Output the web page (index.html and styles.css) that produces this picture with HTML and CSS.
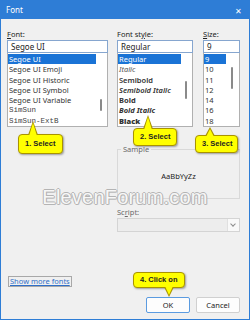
FILE: index.html
```html
<!DOCTYPE html>
<html lang="en">
<head>
  <meta charset="UTF-8">
  <meta name="viewport" content="width=device-width, initial-scale=1.0">
  <title>Font</title>
  <link rel="stylesheet" href="styles.css">
</head>
<body>
  <div class="dialog">
    <div class="titlebar">
      <span class="title">Font</span>
      <span class="close">&#x2715;</span>
    </div>

    <div class="frame">
      <div class="pickers">
        <div class="picker picker-font">
          <div class="lbl"><u>F</u>ont:</div>
          <div class="field">Segoe UI</div>
          <div class="list">
            <ul class="items">
              <li class="sel">Segoe UI</li>
              <li>Segoe UI Emoji</li>
              <li>Segoe UI Historic</li>
              <li>Segoe UI Symbol</li>
              <li>Segoe UI Variable</li>
              <li class="mono">SimSun</li>
              <li class="mono">SimSun-ExtB</li>
            </ul>
            <div class="scroll"><span class="thumb thumb-font"></span></div>
          </div>
        </div>

        <div class="picker picker-style">
          <div class="lbl">Font st<u>y</u>le:</div>
          <div class="field">Regular</div>
          <div class="list">
            <ul class="items">
              <li class="sel">Regular</li>
              <li class="it">Italic</li>
              <li class="sb">Semibold</li>
              <li class="sb it">Semibold Italic</li>
              <li class="bd">Bold</li>
              <li class="bd it">Bold Italic</li>
              <li class="bk">Black</li>
            </ul>
            <div class="scroll"><span class="thumb thumb-style"></span></div>
          </div>
        </div>

        <div class="picker picker-size">
          <div class="lbl"><u>S</u>ize:</div>
          <div class="field">9</div>
          <div class="list">
            <ul class="items">
              <li class="sel">9</li>
              <li>10</li>
              <li>11</li>
              <li>12</li>
              <li>14</li>
              <li>16</li>
              <li>18</li>
            </ul>
            <div class="scroll"><span class="thumb thumb-size"></span></div>
          </div>
        </div>
      </div>

      <div class="preview">
        <fieldset class="sample">
          <legend>Sample</legend>
          <div class="sample-text">AaBbYyZz</div>
        </fieldset>
        <div class="lbl lbl-muted">Sc<u>r</u>ipt:</div>
        <div class="select"><span class="chev"></span></div>
      </div>

      <div class="footer">
        <a class="more" href="#">Show more fonts</a>
        <div class="buttons">
          <button class="btn btn-ok">OK</button>
          <button class="btn">Cancel</button>
        </div>
      </div>
    </div>

    <div class="watermark">ElevenForum.com</div>

    <div class="callout callout-1">1. Select</div>
    <div class="callout callout-2">2. Select</div>
    <div class="callout callout-3">3. Select</div>
    <div class="callout callout-4 down">4. Click on</div>
  </div>
</body>
</html>
```

FILE: styles.css
```css
body { margin: 0; font-family: 'Noto Sans', 'Open Sans', sans-serif; font-size: 7.5px; color: #1a1a1a; background: #fff; }
u { text-decoration-thickness: 1px; text-underline-offset: 1px; }

.dialog { position: relative; width: 250px; height: 320px; }
.titlebar { height: 19px; background: #2e7dd6; color: #fff; display: flex; align-items: center; justify-content: space-between; padding: 0 8px 0 6px; }
.title { font-size: 8px; }
.close { font-size: 8px; margin-top: 2px; }

.frame { height: 301px; box-sizing: border-box; border: 1px solid #2e7dd6; border-top: none; background: #f0f0f0; padding: 10px 9px 6px 6px; display: flex; flex-direction: column; }

.pickers { display: flex; }
.picker-font { width: 101px; }
.picker-style { width: 76px; margin-left: 9px; }
.picker-size { width: 37px; margin-left: 10px; }

.lbl { height: 10px; line-height: 10px; margin-bottom: 1px; color: #222; }
.lbl-muted { color: #6a6a6a; }

.field { height: 13px; box-sizing: border-box; border: 1px solid #86a6cf; background: #fff; line-height: 11px; padding-left: 3px; font-size: 8px; }

.list { height: 74px; box-sizing: border-box; border: 1px solid #b0b0b0; border-top: none; background: #fff; display: flex; }
.items { list-style: none; margin: 0; padding: 1px 0 0 0; flex: 1; overflow: hidden; }
.items li { height: 10.3px; line-height: 10.3px; padding-left: 1px; white-space: nowrap; color: #333; }
.items li.sel { background: #1a73d6; color: #fff; }
.items .mono { font-family: 'Liberation Mono', monospace; font-size: 7.5px; color: #444; }
.items .it { font-style: italic; }
.items .sb { font-weight: 600; }
.items .bd { font-weight: 700; }
.items .bk { font-weight: 900; }
.picker-style .items li.it:not(.sb):not(.bd) { color: #555; }

.scroll { width: 11px; position: relative; }
.thumb { position: absolute; left: 4px; width: 2px; background: #8a8a8a; border-radius: 1px; }
.thumb-font { top: 46px; height: 12px; }
.thumb-style { top: 28px; height: 18px; }
.thumb-size { top: 14px; height: 22px; }
.picker-size .scroll { width: 13px; }
.picker-size .thumb { left: 5px; }

.preview { margin-left: 110px; }
.sample { margin: 17px 0 0 0; padding: 0; height: 55px; box-sizing: border-box; border: 1px solid #d9d9d9; min-width: 0; }
.sample legend { margin-left: 3px; padding: 0 2px; line-height: 10px; color: #6a6a6a; }
.sample-text { height: 44px; line-height: 44px; text-align: center; color: #222; }
.preview .lbl { margin-top: 8px; }

.select { height: 14px; box-sizing: border-box; border: 1px solid #d4d4d4; background: #ededed; display: flex; justify-content: flex-end; }
.chev { width: 11px; background: #f9f9f9; border-left: 1px solid #e0e0e0; position: relative; }
.chev::after { content: ""; position: absolute; left: 3px; top: 3px; width: 3px; height: 3px; border-right: 1px solid #8c8c8c; border-bottom: 1px solid #8c8c8c; transform: rotate(45deg); }

.footer { margin-top: auto; }
.more { display: inline-block; color: #2f6fc9; text-decoration: underline; border: 1px solid #a8a8a8; padding: 0 1px; line-height: 9px; margin-left: 1px; }
.buttons { display: flex; justify-content: flex-end; gap: 6px; margin-top: 10px; }
.btn { width: 44px; height: 16px; padding: 0; font-family: inherit; font-size: 7.5px; color: #1a1a1a; background: #fdfdfd; border: 1px solid #d0d0d0; border-radius: 2px; }
.btn-ok { border-color: #5b9be0; }

.watermark { position: absolute; left: 0; right: 0; top: 189px; line-height: 16px; text-align: center; font-family: 'Liberation Sans', sans-serif; font-size: 20px; color: #f7f7f7; text-shadow: -1px 0 #b4b4b4, 1px 0 #b4b4b4, 0 -1px #b4b4b4, 0 1px #b4b4b4, 1px 1px #c8c8c8; letter-spacing: 0.2px; }

.callout { position: absolute; height: 18px; box-sizing: border-box; padding: 0 6px; line-height: 16px; background: #ffff00; border: 1px solid #a99300; border-radius: 4px; box-shadow: 1px 1px 2px rgba(0,0,0,0.35); font-family: 'Liberation Sans', sans-serif; font-weight: 700; font-size: 7.5px; color: #222; white-space: nowrap; }
.callout::before, .callout::after { content: ""; position: absolute; width: 0; height: 0; border-style: solid; }
.callout::before { left: 9px; top: -14px; border-width: 0 5px 14px 5px; border-color: transparent transparent #a99300 transparent; }
.callout::after { left: 10px; top: -12px; border-width: 0 4px 13px 4px; border-color: transparent transparent #ffff00 transparent; }
.callout.down::before { top: auto; bottom: -10px; border-width: 10px 5px 0 5px; border-color: #a99300 transparent transparent transparent; }
.callout.down::after { top: auto; bottom: -8px; border-width: 9px 4px 0 4px; border-color: #ffff00 transparent transparent transparent; }

.callout-1 { left: 18px; top: 134px; width: 45px; height: 20px; line-height: 18px; }
.callout-2 { left: 133px; top: 128px; width: 44px; }
.callout-3 { left: 195px; top: 135px; width: 43px; }
.callout-3::before { top: -9px; border-width: 0 5px 9px 5px; }
.callout-3::after { top: -7px; border-width: 0 4px 8px 4px; }
.callout-4 { left: 133px; top: 272px; width: 52px; height: 16px; line-height: 14px; }
.callout-4::before { left: 30px; }
.callout-4::after { left: 31px; }
```
